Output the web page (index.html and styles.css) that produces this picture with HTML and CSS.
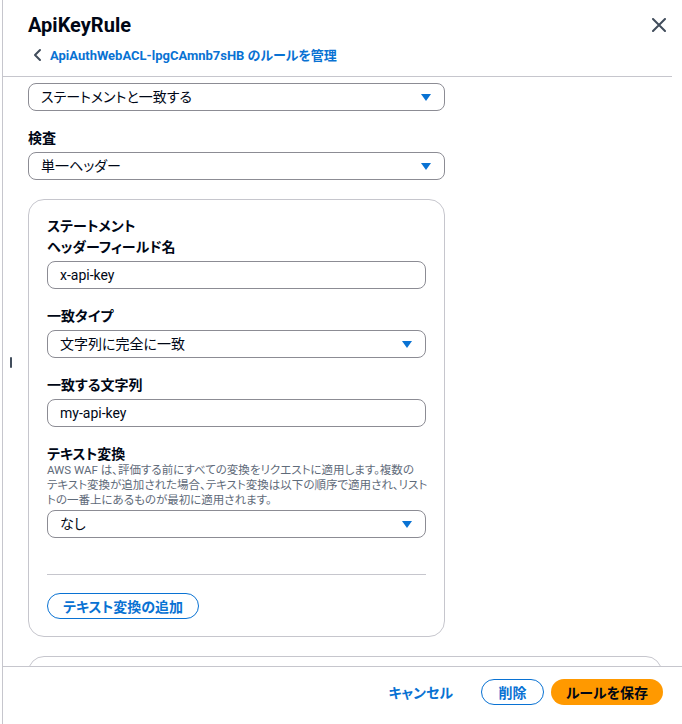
FILE: index.html
```html
<!DOCTYPE html>
<html lang="ja">
<head>
    <meta charset="UTF-8">
    <meta name="viewport" content="width=device-width, initial-scale=1.0">
    <title>ApiKeyRule</title>
    <link rel="stylesheet" href="styles.css">
</head>
<body>
    <div class="panel">
        <div class="resize-handle"></div>

        <div class="header">
            <div class="header-top">
                <h1>ApiKeyRule</h1>
                <button class="close-btn" aria-label="閉じる">
                    <svg width="14" height="14" viewBox="0 0 14 14"><path d="M1 1 L13 13 M13 1 L1 13" stroke="#414d5c" stroke-width="2" stroke-linecap="round"/></svg>
                </button>
            </div>
            <a class="back-link" href="#">
                <svg width="10" height="14" viewBox="0 0 10 14"><path d="M7 2 L2 7 L7 12" fill="none" stroke="#414d5c" stroke-width="2" stroke-linecap="round" stroke-linejoin="round"/></svg>
                ApiAuthWebACL-lpgCAmnb7sHB のルールを管理
            </a>
        </div>

        <div class="content">
            <div class="column">
                <div class="select">ステートメントと一致する<span class="caret"></span></div>

                <div class="field">
                    <label>検査</label>
                    <div class="select">単一ヘッダー<span class="caret"></span></div>
                </div>

                <div class="box">
                    <div class="box-title">ステートメント</div>
                    <div class="field tight">
                        <label>ヘッダーフィールド名</label>
                        <div class="input">x-api-key</div>
                    </div>
                    <div class="field">
                        <label>一致タイプ</label>
                        <div class="select">文字列に完全に一致<span class="caret"></span></div>
                    </div>
                    <div class="field">
                        <label>一致する文字列</label>
                        <div class="input">my-api-key</div>
                    </div>
                    <div class="field">
                        <label>テキスト変換</label>
                        <p class="desc">AWS WAF は、評価する前にすべての変換をリクエストに適用します。複数の<br>テキスト変換が追加された場合、テキスト変換は以下の順序で適用され、リスト<br>トの一番上にあるものが最初に適用されます。</p>
                        <div class="select">なし<span class="caret"></span></div>
                    </div>
                    <hr class="divider">
                    <button class="btn-outline">テキスト変換の追加</button>
                </div>
            </div>
            <div class="box wide"></div>
        </div>

        <div class="footer">
            <button class="btn-link">キャンセル</button>
            <button class="btn-outline">削除</button>
            <button class="btn-primary">ルールを保存</button>
        </div>
    </div>
</body>
</html>
```

FILE: styles.css
```css
* {
    box-sizing: border-box;
}
html, body {
    margin: 0;
    height: 100%;
}
body {
    font-family: Roboto, 'Noto Sans CJK JP', sans-serif;
    font-feature-settings: "palt";
    font-size: 14px;
    color: #000716;
    background-color: #ffffff;
    overflow: hidden;
}
.panel {
    position: relative;
    height: 724px;
    margin-left: 2px;
    border-left: 1px solid #c6c6cd;
    display: flex;
    flex-direction: column;
}
.resize-handle {
    position: absolute;
    left: 7px;
    top: 357px;
    width: 2px;
    height: 11px;
    border-radius: 1px;
    background-color: #414d5c;
}
.header {
    height: 77px;
    padding: 13px 0 0 25px;
    border-bottom: 1px solid #c6c6cd;
    margin-right: 10px;
    flex-shrink: 0;
}
.header-top {
    display: flex;
    justify-content: space-between;
    align-items: center;
}
.header h1 {
    margin: 0;
    font-size: 20px;
    font-weight: 700;
    line-height: 24px;
}
.close-btn {
    background: none;
    border: none;
    padding: 0;
    margin-right: 6px;
    display: flex;
}
.back-link {
    display: flex;
    align-items: center;
    gap: 7px;
    margin-top: 8px;
    padding-left: 5px;
    color: #0972d3;
    font-size: 13px;
    font-weight: 700;
    text-decoration: none;
}
.content {
    flex: 1;
    overflow: hidden;
    padding: 6px 0 0 25px;
}
.column {
    width: 417px;
}
.select, .input {
    position: relative;
    height: 28px;
    border: 1px solid #8c8c94;
    border-radius: 8px;
    padding: 0 12px;
    line-height: 26px;
}
.caret {
    position: absolute;
    right: 13px;
    top: 10px;
    width: 0;
    height: 0;
    border-left: 5px solid transparent;
    border-right: 5px solid transparent;
    border-top: 7px solid #0972d3;
}
.field {
    margin-top: 17px;
}
.field.tight {
    margin-top: 1px;
}
.field label {
    display: block;
    font-weight: 700;
    line-height: 20px;
    margin-bottom: 4px;
}
.desc {
    margin: -5px 0 2px;
    font-size: 11.5px;
    line-height: 15px;
    color: #5f6b7a;
    white-space: nowrap;
}
.box {
    margin-top: 19px;
    border: 1px solid #c6c6cd;
    border-radius: 16px;
    padding: 16px 18px 17px;
}
.box-title {
    font-weight: 700;
    line-height: 20px;
}
.box.wide {
    width: 634px;
    height: 40px;
    margin-top: 19px;
}
.divider {
    border: none;
    border-top: 1px solid #c6c6cd;
    margin: 36px 0 18px;
}
.btn-outline {
    font-family: inherit;
    font-feature-settings: inherit;
    font-size: 14px;
    font-weight: 700;
    color: #0972d3;
    background-color: #ffffff;
    border: 1px solid #0972d3;
    border-radius: 20px;
    height: 26px;
    padding: 0 15px;
}
.footer {
    height: 58px;
    flex-shrink: 0;
    border-top: 1px solid #c6c6cd;
    display: flex;
    justify-content: flex-end;
    align-items: center;
    gap: 7px;
    padding: 0 19px 8px 0;
    background-color: #ffffff;
}
.footer .btn-outline {
    width: 63px;
    padding: 0;
}
.btn-link {
    font-family: inherit;
    font-feature-settings: inherit;
    font-size: 14px;
    font-weight: 700;
    color: #0972d3;
    background: none;
    border: none;
    padding: 0 21px 0 20px;
}
.btn-primary {
    font-family: inherit;
    font-feature-settings: inherit;
    font-size: 14px;
    font-weight: 700;
    color: #000716;
    background-color: #ff9900;
    border: none;
    border-radius: 20px;
    height: 26px;
    width: 112px;
}
```
